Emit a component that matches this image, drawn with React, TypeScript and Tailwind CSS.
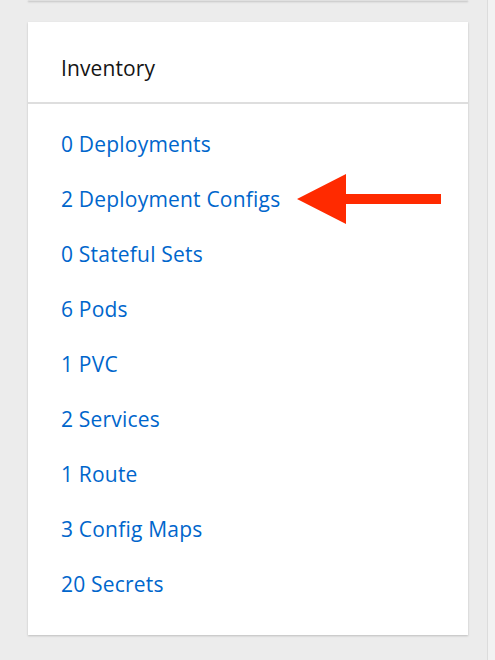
import React from "react";

const items = [
  "0 Deployments",
  "2 Deployment Configs",
  "0 Stateful Sets",
  "6 Pods",
  "1 PVC",
  "2 Services",
  "1 Route",
  "3 Config Maps",
  "20 Secrets",
];

export default function App() {
  return (
    <div
      className="w-[495px] h-[660px] bg-[#ececec] flex overflow-hidden"
      style={{ fontFamily: '"Open Sans", "Liberation Sans", sans-serif' }}
    >
      <div className="w-[488px] flex flex-col border-r border-[#dcdcdc]">
        <div className="h-[1px] mx-[28px] w-[440px] bg-[#e0e0e0] shadow-[0_1px_2px_rgba(0,0,0,0.25)]" />
        <div className="mt-[21px] ml-[28px] w-[440px] h-[613px] bg-white shadow-[0_1px_2px_rgba(0,0,0,0.2)] flex flex-col">
          <div className="h-[82px] border-b-2 border-[#dedede] flex items-center pl-[33px] pt-[14px]">
            <span className="text-[21px] text-[#151515] tracking-[0.1px]">Inventory</span>
          </div>
          <div className="flex flex-col pt-[26px] pl-[33px]">
            {items.map((t) => (
              <div key={t} className="h-[55px] flex items-start">
                <a className="text-[21px] leading-[28px] text-[#0066cc] tracking-[0.2px] cursor-pointer">
                  {t}
                </a>
                {t === "2 Deployment Configs" && (
                  <svg
                    className="ml-[17px] mt-[-11px]"
                    width="145"
                    height="50"
                    viewBox="0 0 145 50"
                  >
                    <polygon
                      points="0,25 49,0 49,20 144,20 144,30 49,30 49,50"
                      fill="#ff2a00"
                    />
                  </svg>
                )}
              </div>
            ))}
          </div>
        </div>
      </div>
      <div className="flex-1 bg-[#f2f2f2]" />
    </div>
  );
}
